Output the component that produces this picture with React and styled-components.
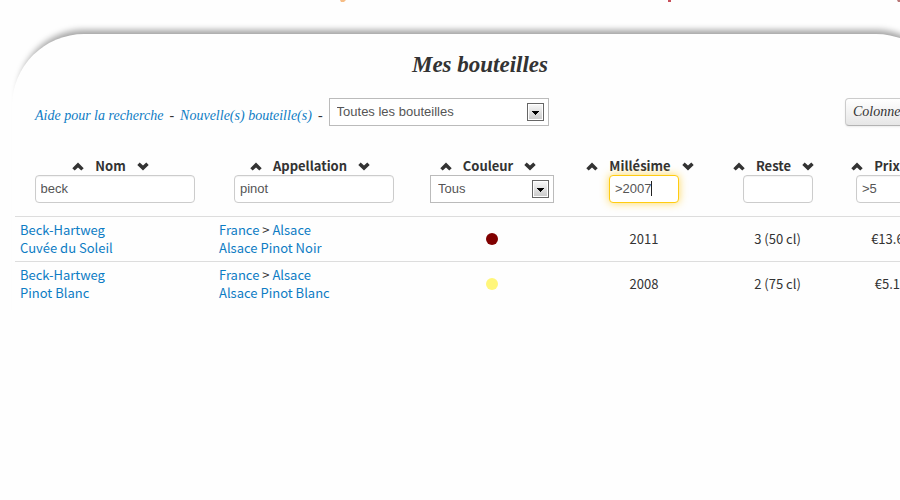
import React, { useState } from "react";
import styled, { createGlobalStyle } from "styled-components";

const sans = '"Noto Sans CJK SC", "Source Sans Pro", "Noto Sans", sans-serif';
const control = '"Liberation Sans", Arial, sans-serif';
const serif = '"Liberation Serif", "Times New Roman", serif';

const GlobalStyle = createGlobalStyle`
  * { box-sizing: border-box; }
  body {
    margin: 0;
    background: #fefefe;
    color: #333;
    font: 13px/18px ${sans};
    overflow-x: hidden;
  }
`;

const Page = styled.div`
  overflow: hidden;
  padding-bottom: 40px;
`;

const Banner = styled.svg`
  display: block;
  width: 100%;
  height: 4px;
`;

const Panel = styled.main`
  margin: 30px -48px 0 12px;
  padding: 13px 3px 19px;
  border-radius: 72px 72px 0 0;
  background: #fefefe;
  box-shadow: 0 -10px 6px -6px #a4a4a4;
`;

const Title = styled.h1`
  margin: 0;
  font: italic bold 23px/36px ${serif};
  text-align: center;
`;

const Toolbar = styled.div`
  display: flex;
  justify-content: space-between;
  align-items: flex-start;
  margin: 15px 20px 20px;
  font: italic 14px/36px ${serif};
`;

const ToolGroup = styled.div`
  display: flex;
  align-items: flex-start;
  gap: 6px;
`;

const Link = styled.a`
  color: #0d7cc4;
  text-decoration: none;
  &:hover { text-decoration: underline; }
`;

const MenuButton = styled.button`
  height: 28px;
  width: 80px;
  padding: 0 7px;
  border: 1px solid #ccc;
  border-bottom-color: #b3b3b3;
  border-radius: 4px;
  background: linear-gradient(#fff, #e6e6e6);
  box-shadow: 0 1px 2px rgba(0, 0, 0, 0.08);
  color: #333;
  font: italic 14px/26px ${serif};
  text-align: left;
  white-space: nowrap;
`;

const SelectBox = styled.span`
  position: relative;
  display: inline-block;
  width: ${(p) => p.$width}px;
  height: 28px;
  vertical-align: top;
`;

const SelectField = styled.select`
  display: block;
  appearance: none;
  width: 100%;
  height: 28px;
  padding: 0 24px 1px 7px;
  border: 1px solid #bbb;
  border-radius: 0;
  background: #fff;
  color: #555;
  font: 13px/18px ${control};
`;

const SelectArrow = styled.svg`
  position: absolute;
  top: 5px;
  right: 4px;
  width: 18px;
  height: 18px;
  pointer-events: none;
`;

const Table = styled.table`
  width: 100%;
  table-layout: fixed;
  border-collapse: separate;
  border-spacing: 0;
`;

const Column = styled.col`
  width: ${(p) => p.$width}px;
`;

const HeadCell = styled.th`
  padding: 3px 5px 13px;
  font-weight: bold;
  text-align: center;
`;

const SortLine = styled.div`
  display: flex;
  justify-content: center;
  align-items: center;
  gap: 11px;
  height: 18px;
  padding-right: 8px;
`;

const SortButton = styled.button`
  display: block;
  width: 12px;
  height: 12px;
  padding: 0;
  border: 0;
  background: none;
  color: #333;
  svg { display: block; }
`;

const FieldBox = styled.span`
  position: relative;
  display: block;
  width: ${(p) => p.$width}px;
  margin: 0 auto;
`;

const Field = styled.input`
  display: block;
  width: 100%;
  height: 28px;
  padding: 0 5px 1px;
  border: 1px solid ${(p) => (p.$active ? "#fc1" : "#ccc")};
  border-radius: 4px;
  outline: 0;
  background: #fff;
  box-shadow: ${(p) =>
    p.$active ? "0 0 8px rgba(255, 200, 20, 0.7)" : "inset 0 1px 1px rgba(0, 0, 0, 0.05)"};
  caret-color: transparent;
  color: #555;
  font: 13px/18px ${control};
`;

const Caret = styled.span`
  position: absolute;
  top: 6px;
  left: 42px;
  width: 1px;
  height: 15px;
  background: #222;
`;

const Cell = styled.td`
  padding: 4px 5px;
  border-top: 1px solid #ddd;
  text-align: ${(p) => (p.$center ? "center" : "left")};
  vertical-align: middle;
`;

const Line = styled.div`
  height: 18px;
  white-space: nowrap;
`;

const Dot = styled.svg`
  display: block;
  width: 12px;
  height: 12px;
  margin: 0 auto;
  fill: ${(p) => p.$color};
`;

function Select({ id, label, width, options }) {
  return (
    <SelectBox $width={width}>
      <SelectField id={id} aria-label={label}>
        {options.map((o) => (
          <option key={o}>{o}</option>
        ))}
      </SelectField>
      <SelectArrow viewBox="0 0 18 18" aria-hidden="true">
        <defs>
          <linearGradient id={`${id}-face`} x1="0" y1="0" x2="0" y2="1">
            <stop offset="0" stopColor="#f6f6f6" />
            <stop offset="1" stopColor="#ccc" />
          </linearGradient>
        </defs>
        <rect x="0.5" y="0.5" width="16" height="17" fill="#fff" stroke="#666" />
        <rect x="2" y="2" width="13" height="14" fill={`url(#${id}-face)`} />
        <path d="M5 8h7v1h-1v1h-1v1H9v1H8v-1H7v-1H6V9H5z" fill="#000" />
      </SelectArrow>
    </SelectBox>
  );
}

function Sort({ down, name }) {
  return (
    <SortButton type="button" aria-label={`${name} : tri ${down ? "décroissant" : "croissant"}`}>
      <svg width="12" height="12" viewBox="0 0 12 12" fill="currentColor">
        <path
          d={
            down
              ? "M0.3 5 2.7 2.6 6 5.6 9.3 2.6 11.7 5 6 10.6z"
              : "M0.3 8.2 6 2.6 11.7 8.2 9.3 10.6 6 7.6 2.7 10.6z"
          }
        />
      </svg>
    </SortButton>
  );
}

const columns = [
  { name: "Nom", col: 199, field: 160, value: "beck" },
  { name: "Appellation", col: 200, field: 160, value: "pinot" },
  { name: "Couleur", col: 156, field: 124, options: ["Tous", "Rouge", "Blanc"] },
  { name: "Millésime", col: 148, field: 70, value: ">2007", active: true },
  { name: "Reste", col: 119, field: 70, value: "" },
  { name: "Prix", field: 70, value: ">5" },
];

const bottles = [
  { maker: "Beck-Hartweg", wine: "Cuvée du Soleil", type: "Alsace Pinot Noir", color: "#800000", year: "2011", left: "3 (50 cl)", price: "€13.60" },
  { maker: "Beck-Hartweg", wine: "Pinot Blanc", type: "Alsace Pinot Blanc", color: "#fff67a", year: "2008", left: "2 (75 cl)", price: "€5.10" },
];

function Filter({ column }) {
  const [value, setValue] = useState(column.value);
  if (column.options) {
    return <Select id="couleur" label={column.name} width={column.field} options={column.options} />;
  }
  return (
    <FieldBox $width={column.field}>
      <Field
        type="text"
        aria-label={column.name}
        $active={column.active}
        value={value}
        onChange={(e) => setValue(e.target.value)}
      />
      {column.active && <Caret />}
    </FieldBox>
  );
}

export default function App() {
  return (
    <Page>
      <GlobalStyle />
      <Banner aria-hidden="true">
        <path d="M340 0h6l-2 2h-3z" fill="#f6bd86" />
        <path d="M668 0h3v2h-3z" fill="#c8505c" />
        <path d="M897 0h3v2h-2z" fill="#b97878" />
      </Banner>
      <Panel>
        <Title>Mes bouteilles</Title>
        <Toolbar>
          <ToolGroup>
            <Link href="#aide">Aide pour la recherche</Link>
            <span>-</span>
            <Link href="#nouvelle">Nouvelle(s) bouteille(s)</Link>
            <span>-</span>
            <Select
              id="bouteilles"
              label="Bouteilles affichées"
              width={220}
              options={["Toutes les bouteilles"]}
            />
          </ToolGroup>
          <MenuButton type="button">Colonnes</MenuButton>
        </Toolbar>
        <Table>
          <colgroup>
            {columns.map((c) => (c.col ? <Column key={c.name} $width={c.col} /> : <col key={c.name} />))}
          </colgroup>
          <thead>
            <tr>
              {columns.map((c) => (
                <HeadCell key={c.name} scope="col">
                  <SortLine>
                    <Sort name={c.name} />
                    {c.name}
                    <Sort name={c.name} down />
                  </SortLine>
                  <Filter column={c} />
                </HeadCell>
              ))}
            </tr>
          </thead>
          <tbody>
            {bottles.map((b) => (
              <tr key={b.wine}>
                <Cell>
                  <Line><Link href="#domaine">{b.maker}</Link></Line>
                  <Line><Link href="#vin">{b.wine}</Link></Line>
                </Cell>
                <Cell>
                  <Line>
                    <Link href="#france">France</Link> &gt; <Link href="#alsace">Alsace</Link>
                  </Line>
                  <Line><Link href="#appellation">{b.type}</Link></Line>
                </Cell>
                <Cell $center>
                  <Dot $color={b.color} viewBox="0 0 12 12" role="img" aria-label="Couleur du vin">
                    <circle cx="6" cy="6" r="6" />
                  </Dot>
                </Cell>
                <Cell $center>{b.year}</Cell>
                <Cell $center>{b.left}</Cell>
                <Cell $center>{b.price}</Cell>
              </tr>
            ))}
          </tbody>
        </Table>
      </Panel>
    </Page>
  );
}
